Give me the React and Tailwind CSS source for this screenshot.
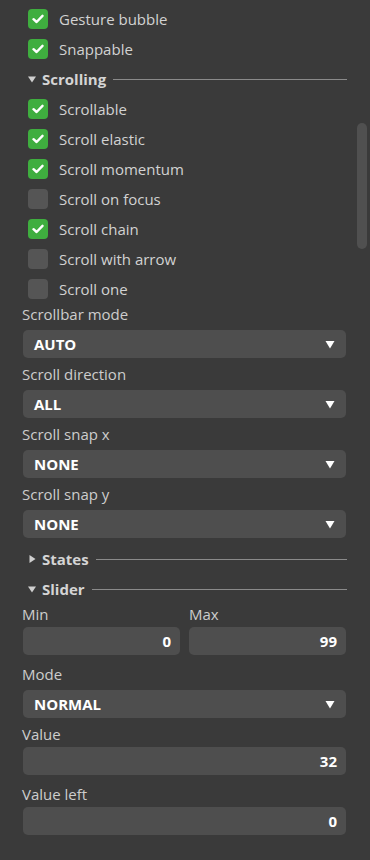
import React from 'react';

const font = { fontFamily: '"Open Sans", "Noto Sans", sans-serif' };

function Check({ label, checked }) {
  return (
    <div className="flex items-center h-[30px] pl-[28px]">
      <div className={`w-[20px] h-[20px] rounded-[4px] flex items-center justify-center ${checked ? 'bg-[#3fae3f]' : 'bg-[#555555]'}`}>
        {checked && (
          <svg width="12" height="10" viewBox="0 0 12 10">
            <path d="M1.5 5.2 L4.6 8 L10.5 1.8" stroke="white" strokeWidth="2.4" fill="none" strokeLinecap="round" strokeLinejoin="round" />
          </svg>
        )}
      </div>
      <span className="ml-[11px] text-[15px] text-[#d2d2d2]">{label}</span>
    </div>
  );
}

function Section({ title, open }) {
  return (
    <div className="flex items-center h-[30px] pl-[28px] pr-[23px]">
      <svg width="8" height="8" viewBox="0 0 8 8" className="shrink-0">
        {open ? <path d="M0 1.5 L8 1.5 L4 7.5 Z" fill="#cfcfcf" /> : <path d="M1.5 0 L7.5 4 L1.5 8 Z" fill="#cfcfcf" />}
      </svg>
      <span className="ml-[6px] text-[15px] font-bold text-[#d4d4d4]">{title}</span>
      <div className="flex-1 h-px bg-[#8a8a8a] ml-[7px]" />
    </div>
  );
}

function Label({ children }) {
  return <div className="h-[20px] leading-[20px] text-[15px] text-[#cdcdcd] pl-[22px]">{children}</div>;
}

function Dropdown({ value }) {
  return (
    <div className="ml-[23px] mr-[24px] h-[28px] rounded-[5px] bg-[#4e4e4e] flex items-center justify-between px-[11px] mt-[6px] mb-[6px]">
      <span className="text-[15px] font-bold text-white">{value}</span>
      <svg width="10" height="9" viewBox="0 0 10 9">
        <path d="M0.5 1 L9.5 1 L5 8.5 Z" fill="white" />
      </svg>
    </div>
  );
}

function NumInput({ value }) {
  return (
    <div className="h-[28px] rounded-[5px] bg-[#4e4e4e] flex items-center justify-end px-[9px]">
      <span className="text-[15px] font-bold text-white">{value}</span>
    </div>
  );
}

export default function App() {
  return (
    <div className="relative w-[370px] h-[860px] bg-[#3a3a3a] overflow-hidden pt-[4px]" style={font}>
      <Check label="Gesture bubble" checked />
      <Check label="Snappable" checked />
      <Section title="Scrolling" open />
      <Check label="Scrollable" checked />
      <Check label="Scroll elastic" checked />
      <Check label="Scroll momentum" checked />
      <Check label="Scroll on focus" />
      <Check label="Scroll chain" checked />
      <Check label="Scroll with arrow" />
      <Check label="Scroll one" />

      <Label>Scrollbar mode</Label>
      <Dropdown value="AUTO" />
      <Label>Scroll direction</Label>
      <Dropdown value="ALL" />
      <Label>Scroll snap x</Label>
      <Dropdown value="NONE" />
      <Label>Scroll snap y</Label>
      <Dropdown value="NONE" />

      <Section title="States" />
      <Section title="Slider" open />

      <div className="grid grid-cols-2 gap-x-[9px] pl-[23px] pr-[24px]">
        <div>
          <div className="h-[20px] leading-[20px] text-[15px] text-[#cdcdcd] -ml-px">Min</div>
          <div className="mt-[3px]"><NumInput value="0" /></div>
        </div>
        <div>
          <div className="h-[20px] leading-[20px] text-[15px] text-[#cdcdcd]">Max</div>
          <div className="mt-[3px]"><NumInput value="99" /></div>
        </div>
      </div>
      <div className="h-[9px]" />
      <Label>Mode</Label>
      <Dropdown value="NORMAL" />
      <Label>Value</Label>
      <div className="pl-[23px] pr-[24px] mt-[3px] mb-[9px]"><NumInput value="32" /></div>
      <Label>Value left</Label>
      <div className="pl-[23px] pr-[24px] mt-[3px]"><NumInput value="0" /></div>

      <div className="absolute left-[357px] top-[123px] w-[10px] h-[126px] rounded-full bg-[#505050]" />
    </div>
  );
}
